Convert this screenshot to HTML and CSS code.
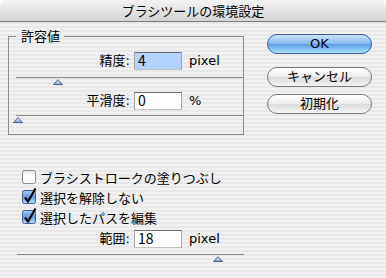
FILE: index.html
```html
<!DOCTYPE html>
<html lang="ja">
<head>
<meta charset="utf-8">
<title>ブラシツールの環境設定</title>
<link rel="stylesheet" href="styles.css">
</head>
<body>
<div class="window">
  <div class="titlebar">ブラシツールの環境設定</div>
  <div class="content">
    <div class="left">
      <fieldset class="group">
        <legend class="legend">許容値</legend>
        <div class="row">
          <span class="lbl">精度:</span>
          <div class="field focused">4</div>
          <span class="unit">pixel</span>
        </div>
        <div class="slider">
          <div class="track"></div>
          <svg class="thumb" style="margin-left:44px" width="10" height="6" viewBox="0 0 10 6"><defs><linearGradient id="tg1" x1="0" y1="0" x2="0" y2="1"><stop offset="0" stop-color="#e8f2ff"/><stop offset="1" stop-color="#7ea6de"/></linearGradient></defs><polygon points="0.5,5.5 5,0.7 9.5,5.5" fill="url(#tg1)" stroke="#4b5e86" stroke-width="1"/></svg>
        </div>
        <div class="row row-second">
          <span class="lbl">平滑度:</span>
          <div class="field">0</div>
          <span class="unit">%</span>
        </div>
        <div class="slider slider-second">
          <div class="track"></div>
          <svg class="thumb" style="margin-left:4px" width="10" height="6" viewBox="0 0 10 6"><defs><linearGradient id="tg2" x1="0" y1="0" x2="0" y2="1"><stop offset="0" stop-color="#e8f2ff"/><stop offset="1" stop-color="#7ea6de"/></linearGradient></defs><polygon points="0.5,5.5 5,0.7 9.5,5.5" fill="url(#tg2)" stroke="#4b5e86" stroke-width="1"/></svg>
        </div>
      </fieldset>

      <div class="checks">
        <div class="check">
          <svg class="box" width="14" height="14" viewBox="0 0 14 14"><defs><linearGradient id="cb0" x1="0" y1="0" x2="0" y2="1"><stop offset="0" stop-color="#e6e6e6"/><stop offset="0.5" stop-color="#ffffff"/><stop offset="1" stop-color="#f4f4f4"/></linearGradient></defs><rect x="0.5" y="0.5" width="13" height="13" rx="2" fill="url(#cb0)" stroke="#8a8a8a"/></svg>
          <span>ブラシストロークの塗りつぶし</span>
        </div>
        <div class="check">
          <svg class="box" width="14" height="14" viewBox="0 0 14 14" overflow="visible"><defs><linearGradient id="cb1" x1="0" y1="0" x2="0" y2="1"><stop offset="0" stop-color="#a9cdf5"/><stop offset="0.5" stop-color="#5f9ce6"/><stop offset="1" stop-color="#b6e0ff"/></linearGradient></defs><rect x="0.5" y="0.5" width="13" height="13" rx="2" fill="url(#cb1)" stroke="#3f5f94"/><path d="M3 7.5 L6 11.5 L13.5 -1.5" fill="none" stroke="#000" stroke-width="2.2" stroke-linejoin="round"/></svg>
          <span>選択を解除しない</span>
        </div>
        <div class="check">
          <svg class="box" width="14" height="14" viewBox="0 0 14 14" overflow="visible"><defs><linearGradient id="cb2" x1="0" y1="0" x2="0" y2="1"><stop offset="0" stop-color="#a9cdf5"/><stop offset="0.5" stop-color="#5f9ce6"/><stop offset="1" stop-color="#b6e0ff"/></linearGradient></defs><rect x="0.5" y="0.5" width="13" height="13" rx="2" fill="url(#cb2)" stroke="#3f5f94"/><path d="M3 7.5 L6 11.5 L13.5 -1.5" fill="none" stroke="#000" stroke-width="2.2" stroke-linejoin="round"/></svg>
          <span>選択したパスを編集</span>
        </div>
      </div>

      <div class="row row-range">
        <span class="lbl lbl-out">範囲:</span>
        <div class="field">18</div>
        <span class="unit">pixel</span>
      </div>
      <div class="slider slider-range">
        <div class="track track-out"></div>
        <svg class="thumb" style="margin-left:205px" width="10" height="6" viewBox="0 0 10 6"><defs><linearGradient id="tg3" x1="0" y1="0" x2="0" y2="1"><stop offset="0" stop-color="#e8f2ff"/><stop offset="1" stop-color="#7ea6de"/></linearGradient></defs><polygon points="0.5,5.5 5,0.7 9.5,5.5" fill="url(#tg3)" stroke="#4b5e86" stroke-width="1"/></svg>
      </div>
    </div>

    <div class="buttons">
      <button class="btn btn-ok">OK</button>
      <button class="btn btn-cancel">キャンセル</button>
      <button class="btn btn-reset">初期化</button>
    </div>
  </div>
</div>
</body>
</html>
```

FILE: styles.css
```css
* { box-sizing: border-box; }
html, body { margin: 0; padding: 0; }
body {
  width: 386px;
  height: 278px;
  overflow: hidden;
  background: #ffffff;
  font-family: "DejaVu Sans", "Noto Sans CJK JP", sans-serif;
  font-size: 13px;
  color: #000;
}
.window {
  width: 386px;
  height: 278px;
  border-radius: 6px 6px 0 0;
  overflow: hidden;
  background: repeating-linear-gradient(to bottom, #f1f1f1 0, #f1f1f1 2px, #e8e8e8 2px, #e8e8e8 4px);
}
.titlebar {
  height: 22px;
  line-height: 21px;
  text-align: center;
  background: linear-gradient(#f3f3f3, #d4d4d4);
  border-bottom: 1px solid #7a7a7a;
  font-family: "Noto Sans CJK JP", sans-serif;
  font-size: 13px;
}
.content {
  display: flex;
  gap: 23px;
  padding: 6px 0 0 8px;
}
.left { width: 236px; }
.group {
  margin: 0;
  padding: 8px 0 11px 0;
  border: 1px solid #8c8c8c;
  min-width: 0;
}
.legend {
  margin-left: 7px;
  padding: 0 4px 0 5px;
  line-height: 16px;
  font-family: "Noto Sans CJK JP", sans-serif;
}
.row {
  display: flex;
  align-items: center;
  height: 18px;
}
.row-second { margin-top: 7px; }
.row-range { margin-top: 3px; }
.lbl {
  width: 121px;
  text-align: right;
  line-height: 18px;
}
.lbl-out { width: 122px; }
.field {
  width: 48px;
  height: 18px;
  margin-left: 4px;
  border: 1px solid;
  border-color: #6c6c6c #a4a4a4 #c4c4c4 #a4a4a4;
  background: #fff;
  padding-left: 3px;
  line-height: 15px;
  font-family: "Noto Sans CJK JP", sans-serif;
  font-size: 14px;
}
.field.focused { background: #b4d4ff; }
.unit { margin-left: 7px; line-height: 18px; }
.slider { margin-top: 7px; }
.slider-second { margin-top: 5px; }
.slider-range { margin-top: 6px; }
.track {
  height: 1px;
  background: #8a8a8a;
  margin-left: 7px;
}
.track-out { margin-left: 9px; }
.thumb {
  display: block;
  margin-top: 1px;
}
.checks {
  margin-top: 32px;
  padding-left: 14px;
}
.check {
  display: flex;
  align-items: center;
  gap: 4px;
  height: 20px;
  font-family: "Noto Sans CJK JP", sans-serif;
}
.box { flex: none; }
.buttons {
  display: flex;
  flex-direction: column;
  width: 105px;
  padding-top: 6px;
}
.btn {
  height: 20px;
  margin: 0;
  padding: 0;
  border-radius: 10px;
  border: 1px solid #7c7c7c;
  background: linear-gradient(#ffffff 0%, #ececec 48%, #dcdcdc 52%, #f4f4f4 100%);
  font: inherit;
  font-size: 13px;
  line-height: 18px;
  color: #000;
  text-align: center;
}
.btn-ok {
  background: linear-gradient(#cfe4fb 0%, #86b9f0 48%, #5d9de8 52%, #ade0ff 100%);
  border-color: #3c5e98;
}
.btn-cancel { margin-top: 13px; }
.btn-reset { margin-top: 7px; }
```
